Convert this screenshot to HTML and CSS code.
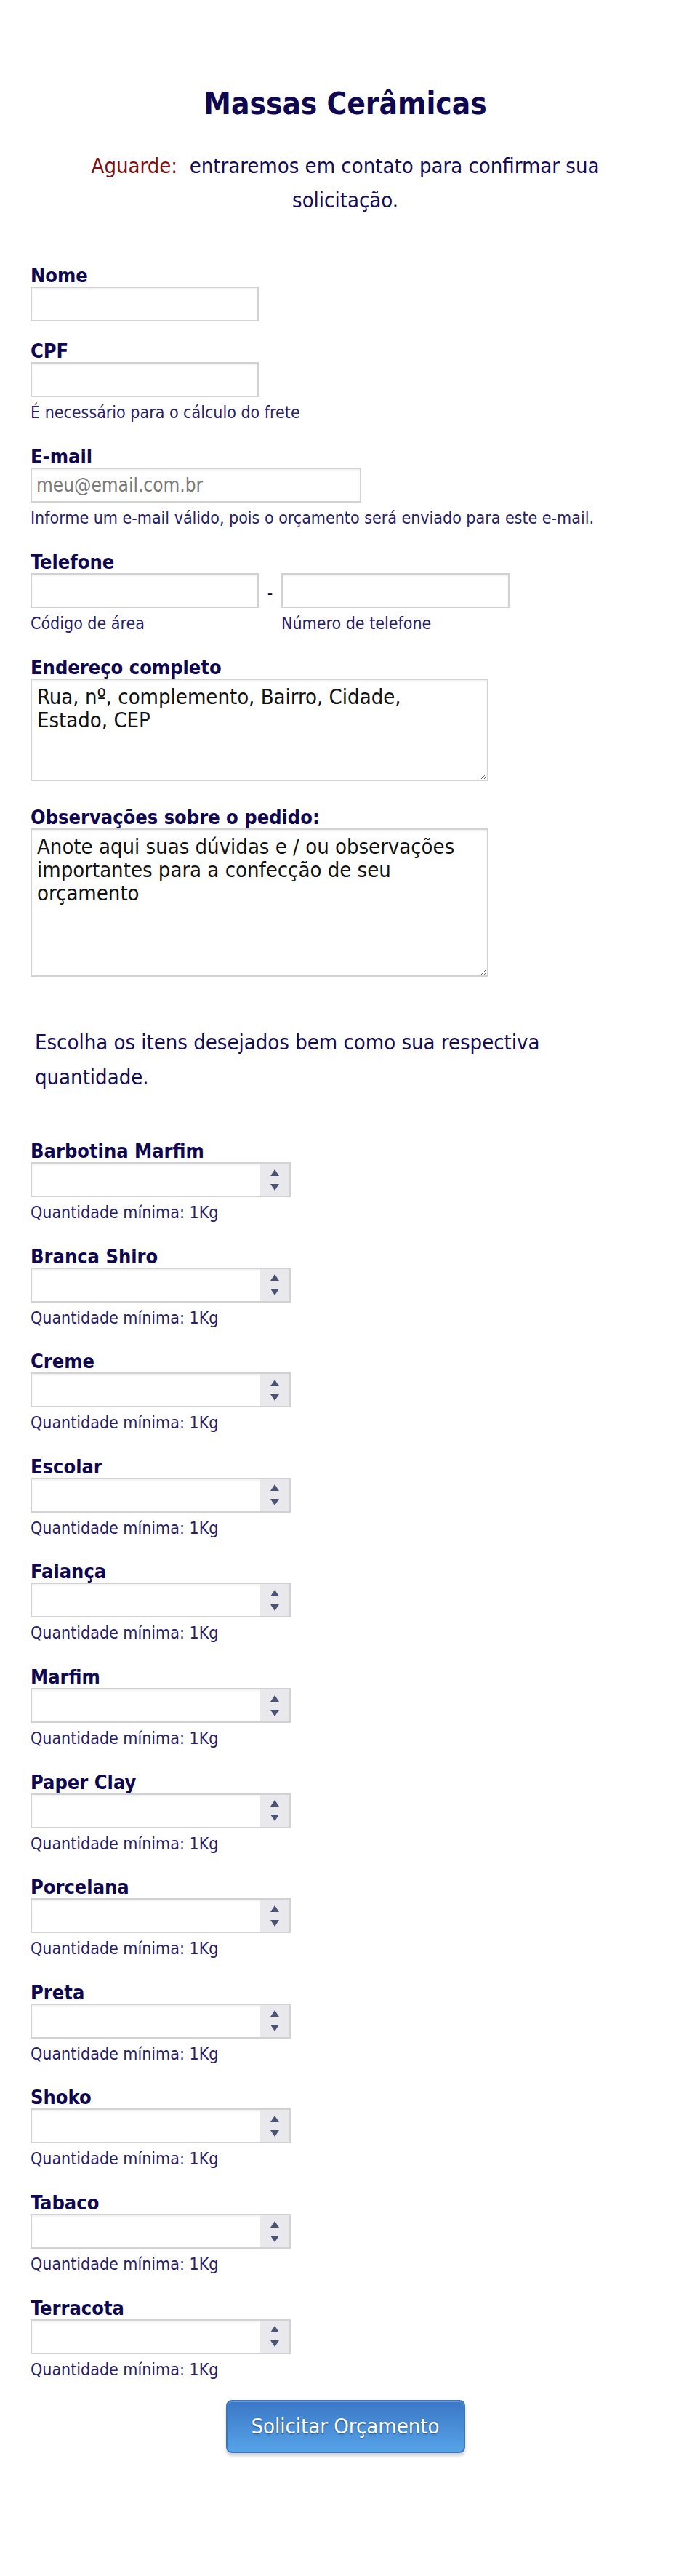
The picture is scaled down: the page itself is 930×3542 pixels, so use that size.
FILE: index.html
```html
<!DOCTYPE html>
<html lang="pt-BR">
<head>
<meta charset="utf-8">
<title>Massas Cerâmicas</title>
<link rel="stylesheet" href="styles.css">
</head>
<body>
<form class="form">
  <h1 class="title">Massas Cerâmicas</h1>
  <p class="intro"><span class="warn">Aguarde:</span>&nbsp; entraremos em contato para confirmar sua solicitação.</p>

  <div class="fields">
    <div class="field">
      <label class="label">Nome</label>
      <input class="text" type="text">
    </div>

    <div class="field">
      <label class="label">CPF</label>
      <input class="text" type="text">
      <div class="hint">É necessário para o cálculo do frete</div>
    </div>

    <div class="field">
      <label class="label">E-mail</label>
      <input class="text wide" type="text" placeholder="meu@email.com.br">
      <div class="hint">Informe um e-mail válido, pois o orçamento será enviado para este e-mail.</div>
    </div>

    <div class="field">
      <label class="label">Telefone</label>
      <div class="phone">
        <div class="phone-col">
          <input class="text" type="text">
          <div class="hint">Código de área</div>
        </div>
        <span class="dash">-</span>
        <div class="phone-col">
          <input class="text" type="text">
          <div class="hint">Número de telefone</div>
        </div>
      </div>
    </div>

    <div class="field field-area">
      <label class="label">Endereço completo</label>
      <textarea class="area area-short">Rua, nº, complemento, Bairro, Cidade, Estado, CEP</textarea>
    </div>

    <div class="field field-area">
      <label class="label">Observações sobre o pedido:</label>
      <textarea class="area area-tall">Anote aqui suas dúvidas e / ou observações importantes para a confecção de seu orçamento</textarea>
    </div>
  </div>

  <p class="choose">Escolha os itens desejados bem como sua respectiva quantidade.</p>

  <div class="items">
    <div class="item">
      <label class="label">Barbotina Marfim</label>
      <div class="num"><input class="num-in" type="text"><span class="spin"><i class="up"></i><i class="down"></i></span></div>
      <div class="hint">Quantidade mínima: 1Kg</div>
    </div>
    <div class="item">
      <label class="label">Branca Shiro</label>
      <div class="num"><input class="num-in" type="text"><span class="spin"><i class="up"></i><i class="down"></i></span></div>
      <div class="hint">Quantidade mínima: 1Kg</div>
    </div>
    <div class="item">
      <label class="label">Creme</label>
      <div class="num"><input class="num-in" type="text"><span class="spin"><i class="up"></i><i class="down"></i></span></div>
      <div class="hint">Quantidade mínima: 1Kg</div>
    </div>
    <div class="item">
      <label class="label">Escolar</label>
      <div class="num"><input class="num-in" type="text"><span class="spin"><i class="up"></i><i class="down"></i></span></div>
      <div class="hint">Quantidade mínima: 1Kg</div>
    </div>
    <div class="item">
      <label class="label">Faiança</label>
      <div class="num"><input class="num-in" type="text"><span class="spin"><i class="up"></i><i class="down"></i></span></div>
      <div class="hint">Quantidade mínima: 1Kg</div>
    </div>
    <div class="item">
      <label class="label">Marfim</label>
      <div class="num"><input class="num-in" type="text"><span class="spin"><i class="up"></i><i class="down"></i></span></div>
      <div class="hint">Quantidade mínima: 1Kg</div>
    </div>
    <div class="item">
      <label class="label">Paper Clay</label>
      <div class="num"><input class="num-in" type="text"><span class="spin"><i class="up"></i><i class="down"></i></span></div>
      <div class="hint">Quantidade mínima: 1Kg</div>
    </div>
    <div class="item">
      <label class="label">Porcelana</label>
      <div class="num"><input class="num-in" type="text"><span class="spin"><i class="up"></i><i class="down"></i></span></div>
      <div class="hint">Quantidade mínima: 1Kg</div>
    </div>
    <div class="item">
      <label class="label">Preta</label>
      <div class="num"><input class="num-in" type="text"><span class="spin"><i class="up"></i><i class="down"></i></span></div>
      <div class="hint">Quantidade mínima: 1Kg</div>
    </div>
    <div class="item">
      <label class="label">Shoko</label>
      <div class="num"><input class="num-in" type="text"><span class="spin"><i class="up"></i><i class="down"></i></span></div>
      <div class="hint">Quantidade mínima: 1Kg</div>
    </div>
    <div class="item">
      <label class="label">Tabaco</label>
      <div class="num"><input class="num-in" type="text"><span class="spin"><i class="up"></i><i class="down"></i></span></div>
      <div class="hint">Quantidade mínima: 1Kg</div>
    </div>
    <div class="item">
      <label class="label">Terracota</label>
      <div class="num"><input class="num-in" type="text"><span class="spin"><i class="up"></i><i class="down"></i></span></div>
      <div class="hint">Quantidade mínima: 1Kg</div>
    </div>
  </div>

  <div class="actions">
    <button class="submit" type="button">Solicitar Orçamento</button>
  </div>
</form>
</body>
</html>
```
FILE: styles.css
```css
html, body {
  margin: 0;
  padding: 0;
  background: #ffffff;
}

body {
  font-family: "DejaVu Sans Condensed", "DejaVu Sans", sans-serif;
  font-stretch: condensed;
  color: #100a50;
}

.form {
  padding: 116.5px 22px 160px 42px;
}

.title {
  margin: 0;
  font-size: 42px;
  line-height: 52px;
  font-weight: bold;
  text-align: center;
  color: #0f0850;
}

.intro {
  margin: 36px 0 0;
  padding: 0 60px;
  font-size: 29px;
  line-height: 47px;
  text-align: center;
  color: #140c55;
}

.warn {
  color: #7f0f12;
}

.fields {
  display: flex;
  flex-direction: column;
  gap: 25px;
  margin-top: 64.6px;
}

.label {
  display: block;
  font-size: 27px;
  line-height: 31px;
  font-weight: bold;
  color: #0f0850;
}

.text {
  display: block;
  box-sizing: border-box;
  width: 314px;
  height: 48px;
  margin: 0;
  padding: 0 6px;
  border: 2px solid #d2d2d2;
  border-radius: 0;
  box-shadow: inset 0 2px 3px rgba(0, 0, 0, 0.06);
  font-family: inherit;
  font-stretch: condensed;
  font-size: 26px;
  color: #222;
  background: #fff;
}

.text.wide {
  width: 455px;
}

.text::placeholder {
  color: #7a7a7a;
}

.hint {
  margin-top: 6px;
  font-size: 23px;
  line-height: 30px;
  color: #27206a;
}

.field .hint {
  padding-bottom: 5px;
}

.phone {
  display: flex;
  align-items: flex-start;
}

.dash {
  width: 31px;
  text-align: center;
  font-size: 23px;
  line-height: 48px;
  padding-top: 3px;
  color: #0f0850;
}

.field-area {
  padding-bottom: 9px;
}

.area {
  display: block;
  box-sizing: border-box;
  width: 630px;
  margin: 0;
  padding: 7px 14px 7px 7px;
  border: 2px solid #d2d2d2;
  border-radius: 0;
  box-shadow: inset 0 2px 3px rgba(0, 0, 0, 0.06);
  font-family: inherit;
  font-stretch: condensed;
  font-size: 29px;
  line-height: 32px;
  color: #111;
  background: #fff;
  resize: both;
}

.area-short {
  height: 141px;
}

.area-tall {
  height: 204px;
}

.choose {
  margin: 57px 0 0;
  padding: 0 100px 0 6px;
  font-size: 29px;
  line-height: 48px;
  color: #140c55;
}

.items {
  display: flex;
  flex-direction: column;
  gap: 29.6px;
  margin-top: 62px;
}

.num {
  display: flex;
  box-sizing: border-box;
  width: 358px;
  height: 48px;
  border: 2px solid #d2d2d2;
  box-shadow: inset 0 2px 3px rgba(0, 0, 0, 0.06);
  background: #fff;
}

.num-in {
  flex: 1;
  min-width: 0;
  margin: 0;
  padding: 0 6px;
  border: 0;
  outline: 0;
  background: transparent;
  font-family: inherit;
  font-size: 26px;
}

.spin {
  width: 40px;
  background: #e9e9ed;
  display: flex;
  flex-direction: column;
  align-items: center;
  justify-content: center;
  gap: 11px;
}

.spin i {
  display: block;
  width: 0;
  height: 0;
  border-left: 6px solid transparent;
  border-right: 6px solid transparent;
}

.spin .up {
  border-bottom: 9px solid #4b5273;
}

.spin .down {
  border-top: 9px solid #4b5273;
}

.actions {
  display: flex;
  justify-content: center;
  margin-top: 27.3px;
}

.submit {
  box-sizing: border-box;
  width: 329px;
  height: 73px;
  margin: 0;
  padding: 0;
  border: 2px solid #3d74bf;
  border-radius: 8px;
  background: linear-gradient(to bottom, #3b78c6 0%, #4a8fd8 55%, #55a4e8 100%);
  box-shadow: 0 4px 4px rgba(0, 0, 0, 0.18), inset 0 1px 0 rgba(255, 255, 255, 0.25);
  font-family: inherit;
  font-stretch: condensed;
  font-size: 29px;
  color: #ffffff;
  text-shadow: 0 1px 2px rgba(0, 0, 0, 0.45);
  cursor: pointer;
}
```
